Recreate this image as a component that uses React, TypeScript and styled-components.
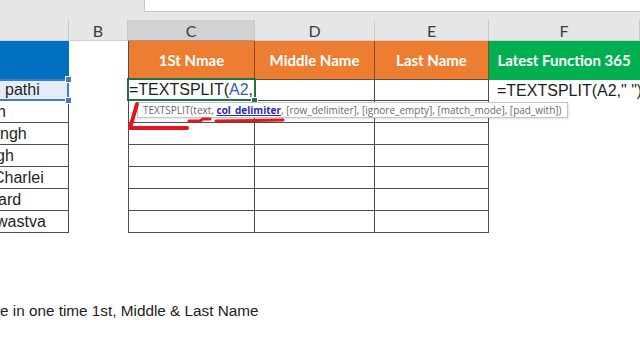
import React from 'react';
import styled, { createGlobalStyle } from 'styled-components';

const Global = createGlobalStyle`
  html, body { margin: 0; padding: 0; background: #ffffff; }
  body { width: 640px; height: 360px; overflow: hidden; }
`;

const Page = styled.div`
  position: relative;
  width: 640px;
  height: 360px;
  background: #ffffff;
  font-family: "Liberation Sans", Arial, sans-serif;
`;

const TopBar = styled.div`
  height: 20px;
  background: #e6e6e6;
  display: flex;
`;

const FormulaBox = styled.div`
  margin-left: 144px;
  flex: 1;
  height: 11px;
  background: #ffffff;
  border-left: 1px solid #c8c8c8;
  border-bottom: 1px solid #c8c8c8;
`;

const Sheet = styled.div`
  display: grid;
  grid-template-columns: 69px 59px 127px 120px 114px 151px;
  grid-template-rows: 21px 39px 21px repeat(6, 22px);
`;

const ColHead = styled.div<{ $sel?: boolean }>`
  box-sizing: border-box;
  background: ${p => (p.$sel ? '#d2d2d2' : '#e6e6e6')};
  border-right: 1px solid #c9c9c9;
  border-bottom: 1px solid ${p => (p.$sel ? '#9a9a9a' : '#d0d0d0')};
  font-family: Lato, "Liberation Sans", sans-serif;
  font-size: 16px;
  color: #3c3c3c;
  display: flex;
  align-items: center;
  justify-content: center;
`;

const Head = styled.div<{ $bg: string; $edge?: boolean }>`
  box-sizing: border-box;
  background: ${p => p.$bg};
  color: #ffffff;
  font-family: Lato, "Liberation Sans", sans-serif;
  font-weight: 700;
  font-size: 15px;
  display: flex;
  align-items: center;
  justify-content: center;
  border-left: ${p => (p.$edge ? '1px solid #4e4e4e' : 'none')};
  border-right: 1px solid ${p => (p.$bg === '#ed7d31' ? '#8a4a1e' : 'transparent')};
  border-bottom: 1px solid ${p => (p.$bg === '#ed7d31' ? '#6b4a30' : 'transparent')};
`;

const Cell = styled.div<{ $right?: boolean; $left?: boolean; $bottom?: boolean; $indent?: number }>`
  box-sizing: border-box;
  position: relative;
  font-size: 16px;
  color: #1e1e1e;
  white-space: nowrap;
  display: flex;
  align-items: center;
  padding-left: ${p => Math.max(p.$indent ?? 0, 0)}px;
  border-right: ${p => (p.$right ? '1px solid #4e4e4e' : 'none')};
  border-left: ${p => (p.$left ? '1px solid #4e4e4e' : 'none')};
  border-bottom: ${p => (p.$bottom ? '1px solid #4e4e4e' : 'none')};
`;

const Clip = styled.span<{ $shift: number }>`
  margin-left: ${p => p.$shift}px;
`;

const Selected = styled(Cell)`
  background: #e4ecf7;
  &::after {
    content: '';
    position: absolute;
    inset: -1px -1px -1px -3px;
    border: 2px solid #3d7cc9;
  }
`;

const Handle = styled.span<{ $top?: boolean; $color: string }>`
  position: absolute;
  right: -4px;
  ${p => (p.$top ? 'top: -4px;' : 'bottom: -4px;')}
  width: 5px;
  height: 5px;
  background: ${p => p.$color};
  border: 1px solid #ffffff;
  z-index: 2;
`;

const Active = styled(Cell)`
  &::after {
    content: '';
    position: absolute;
    inset: -2px -2px -1px -2px;
    border: 2px solid #217346;
  }
`;

const Ref = styled.span`
  color: #2f5ea8;
`;

const Caret = styled.span`
  display: inline-block;
  width: 1px;
  height: 16px;
  background: #111;
  margin-left: 1px;
`;

const Tooltip = styled.div`
  position: absolute;
  left: 137px;
  top: 102px;
  height: 16px;
  padding: 0 5px;
  box-sizing: border-box;
  background: #ffffff;
  border: 1px solid #c4c4c4;
  box-shadow: 1px 1px 2px rgba(0, 0, 0, 0.12);
  font-family: "Open Sans", sans-serif;
  font-size: 10px;
  line-height: 14px;
  color: #6a6a6a;
  white-space: nowrap;
  z-index: 3;
`;

const Arg = styled.span`
  color: #2b2bb5;
  font-weight: 700;
  text-decoration: underline;
`;

const Ink = styled.svg`
  position: absolute;
  left: 0;
  top: 0;
  z-index: 4;
  pointer-events: none;
`;

const Note = styled.p`
  margin: 69px 0 0 0;
  font-size: 15.3px;
  color: #222222;
`;

// visible tails of the names in column A, which starts left of the window
const names: [string, number][] = [
  ['h', -3],
  ['ngh', 0],
  ['gh', -4],
  ['Charlei', -7],
  ['ard', -2],
  ['wastva', -4],
];

export default function App() {
  return (
    <Page>
      <Global />
      <TopBar>
        <FormulaBox />
      </TopBar>
      <Sheet>
        <ColHead />
        <ColHead>B</ColHead>
        <ColHead $sel>C</ColHead>
        <ColHead>D</ColHead>
        <ColHead>E</ColHead>
        <ColHead>F</ColHead>

        <Head $bg="#0070c0" />
        <Head $bg="#ffffff" />
        <Head $bg="#ed7d31" $edge>1St Nmae</Head>
        <Head $bg="#ed7d31">Middle Name</Head>
        <Head $bg="#ed7d31">Last Name</Head>
        <Head $bg="#00b050">Latest Function 365</Head>

        <Selected $right $bottom $indent={5}>
          pathi
          <Handle $top $color="#3d7cc9" />
          <Handle $color="#3d7cc9" />
        </Selected>
        <Cell />
        <Active $left $right $bottom>
          =TEXTSPLIT(<Ref>A2</Ref>,<Caret />
          <Handle $color="#217346" />
        </Active>
        <Cell $right $bottom />
        <Cell $right $bottom />
        <Cell $indent={8}>=TEXTSPLIT(A2," ")</Cell>

        {names.map(([n, s]) => (
          <React.Fragment key={n}>
            <Cell $right $bottom>
              <Clip $shift={s}>{n}</Clip>
            </Cell>
            <Cell />
            <Cell $left $right $bottom />
            <Cell $right $bottom />
            <Cell $right $bottom />
            <Cell />
          </React.Fragment>
        ))}
      </Sheet>
      <Note>e in one time 1st, Middle &amp; Last Name</Note>

      <Tooltip>
        TEXTSPLIT(text, <Arg>col_delimiter</Arg>, [row_delimiter], [ignore_empty], [match_mode], [pad_with])
      </Tooltip>

      <Ink width="640" height="360" viewBox="0 0 640 360">
        <g fill="none" stroke="#e3161b" strokeLinecap="round" strokeLinejoin="round">
          <path d="M137 104 L130 128 L187 128" strokeWidth="4" />
          <path d="M189 121 L200 121 L203 119 L210 119" strokeWidth="3" />
          <path d="M216 121 L283 120" strokeWidth="3" />
        </g>
      </Ink>
    </Page>
  );
}
